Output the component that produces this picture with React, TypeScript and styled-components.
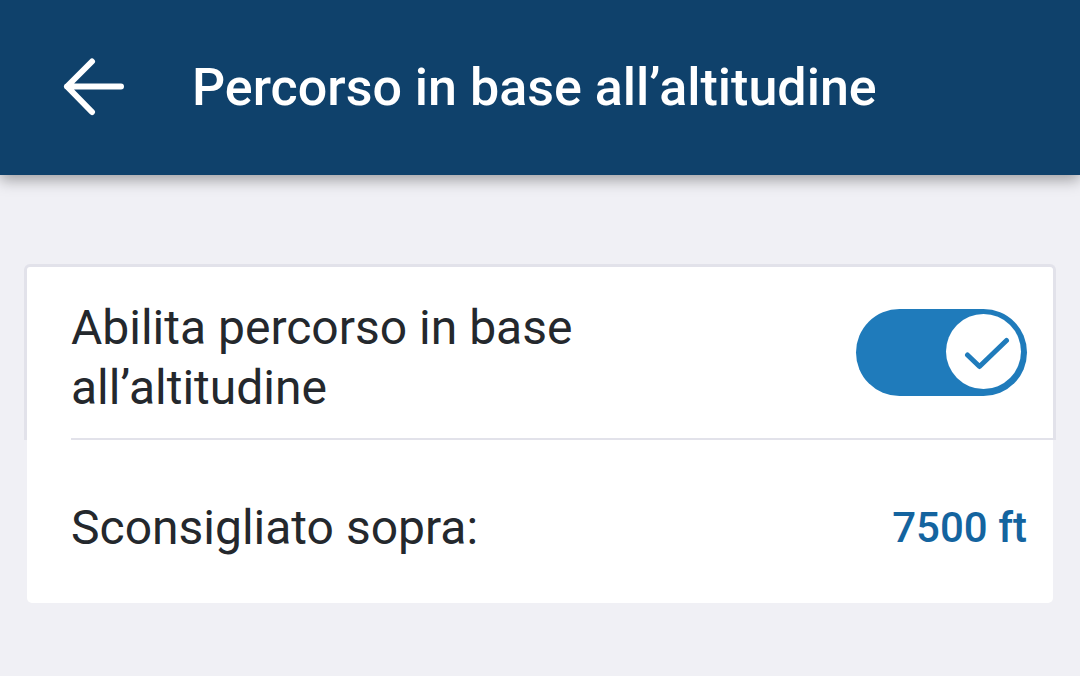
import React, { useState } from 'react'
import styled, { createGlobalStyle } from 'styled-components'

const colors = {
  header: '#0f416b',
  page: '#f0f0f5',
  border: '#e2e2ea',
  text: '#24282d',
  value: '#14649f',
  toggle: '#1f7bbb',
  white: '#ffffff',
}

const GlobalStyle = createGlobalStyle`
  html, body {
    margin: 0;
    padding: 0;
    background: ${colors.page};
    font-family: Roboto, "Liberation Sans", sans-serif;
  }
`

const Page = styled.div`
  width: 1080px;
  height: 676px;
  overflow: hidden;
  background: ${colors.page};
`

const Header = styled.header`
  position: relative;
  z-index: 1;
  height: 175px;
  display: flex;
  align-items: center;
  padding-left: 62px;
  background: ${colors.header};
  box-shadow: 0 5px 14px rgba(0, 0, 0, 0.34);
`

const BackButton = styled.button`
  width: 64px;
  height: 60px;
  padding: 0;
  border: 0;
  background: none;
  display: flex;
  align-items: center;
  justify-content: center;
  cursor: pointer;
`

const Title = styled.h1`
  margin: 0 0 0 66px;
  color: ${colors.white};
  font-size: 52px;
  font-weight: 500;
`

const Content = styled.main`
  padding: 89px 24px 0;
`

const ToggleSection = styled.section`
  background: ${colors.white};
  border: 3px solid ${colors.border};
  border-bottom: none;
  border-radius: 6px 6px 0 0;
  padding-left: 44px;
`

const Row = styled.div<{ $height: number; $divider?: boolean; $offset?: number }>`
  box-sizing: border-box;
  height: ${p => p.$height}px;
  display: flex;
  align-items: center;
  justify-content: space-between;
  gap: 24px;
  padding: ${p => p.$offset ?? 0}px 26px 0 0;
  border-bottom: ${p => (p.$divider ? `2px solid ${colors.border}` : 'none')};
`

const ValueSection = styled.section`
  margin: 0 3px;
  padding-left: 44px;
  background: ${colors.white};
  border-radius: 0 0 5px 5px;
`

const Label = styled.span<{ $maxWidth?: number; $offset?: number }>`
  max-width: ${p => (p.$maxWidth ? `${p.$maxWidth}px` : 'none')};
  padding-top: ${p => p.$offset ?? 0}px;
  color: ${colors.text};
  font-size: 48px;
  line-height: 60px;
  font-weight: 400;
`

const Value = styled.span`
  color: ${colors.value};
  font-size: 42px;
  font-weight: 500;
`

const Track = styled.button<{ $on: boolean }>`
  position: relative;
  flex: none;
  width: 171px;
  height: 87px;
  padding: 0;
  border: 0;
  border-radius: 44px;
  background: ${p => (p.$on ? colors.toggle : '#b9bec6')};
  cursor: pointer;
`

const Knob = styled.span<{ $on: boolean }>`
  position: absolute;
  top: 5px;
  left: ${p => (p.$on ? '90px' : '5px')};
  width: 75px;
  height: 75px;
  border-radius: 50%;
  background: ${colors.white};
  display: flex;
  align-items: center;
  justify-content: center;
`

const App: React.FC = () => {
  const [enabled, setEnabled] = useState(true)

  return (
    <Page>
      <GlobalStyle />
      <Header>
        <BackButton aria-label="Indietro">
          <svg width="64" height="60" viewBox="0 0 64 60" fill="none">
            <path
              d="M59 28.5H5M30 3.5L5 28.5L30 54"
              stroke={colors.white}
              strokeWidth="6"
              strokeLinecap="round"
              strokeLinejoin="round"
            />
          </svg>
        </BackButton>
        <Title>Percorso in base all’altitudine</Title>
      </Header>
      <Content>
        <ToggleSection>
          <Row $height={173} $divider>
            <Label $maxWidth={560} $offset={10}>
              Abilita percorso in base all’altitudine
            </Label>
            <Track $on={enabled} onClick={() => setEnabled(!enabled)}>
              <Knob $on={enabled}>
                {enabled && (
                  <svg width="52" height="44" viewBox="0 0 52 44" fill="none">
                    <path
                      d="M9.5 25L21.5 36.5L48.5 10.5"
                      stroke={colors.toggle}
                      strokeWidth="5"
                      strokeLinecap="round"
                      strokeLinejoin="round"
                    />
                  </svg>
                )}
              </Knob>
            </Track>
          </Row>
        </ToggleSection>
        <ValueSection>
          <Row $height={163} $offset={12}>
            <Label>Sconsigliato sopra:</Label>
            <Value>7500 ft</Value>
          </Row>
        </ValueSection>
      </Content>
    </Page>
  )
}

export default App
